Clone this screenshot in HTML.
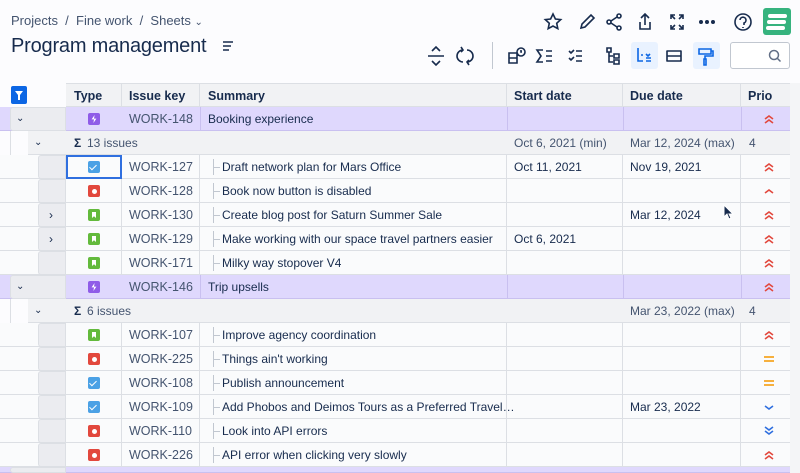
<!DOCTYPE html>
<html><head><meta charset="utf-8"><style>
*{margin:0;padding:0;box-sizing:border-box}
html,body{width:800px;height:473px;overflow:hidden}
body{background:#fcfcfe;font-family:"Liberation Sans",sans-serif;color:#172b4d;position:relative}
.a{position:absolute}
.bc{left:11px;top:13px;font-size:13px;color:#44546f}
.h1{left:11px;top:35px;font-size:20px;font-weight:500;color:#172b4d;letter-spacing:-0.2px}
.r{position:absolute;left:0;width:790px;height:24px;font-size:12px}
.c{position:absolute;top:0;height:24px;line-height:24px;white-space:nowrap;overflow:hidden}
.d{background:#fafbfc;border-bottom:1px solid #dcdfe4}
.d .c{border-right:1px solid #dcdfe4}
.g{background:#dfd8fd;border-bottom:1px solid #c9c0f0}
.s{background:#f1f2f4;border-bottom:1px solid #dcdfe4;color:#44546f}
.key{color:#44546f;font-size:12.5px}
.ty{position:absolute;left:88px;top:6px;width:12px;height:12px;border-radius:2px}
.tree{position:absolute;left:213px;top:4px;width:8px;height:16px;border-left:1px solid #c1c7d0}
.tree:after{content:"";position:absolute;left:0;top:8px;width:6px;border-top:1px solid #c1c7d0}
.gut{position:absolute;top:0;height:24px;background:#ebecf0;border:1px solid #dcdfe4;border-radius:3px 0 0 3px}
.pr{position:absolute;left:762px;top:5px}
.t{background:#4ba1e5}.t:after{content:"";position:absolute;left:3px;top:2px;width:3px;height:6px;border:solid #fff;border-width:0 1.5px 1.5px 0;transform:rotate(45deg)}
.b{background:#e2483d}.b:after{content:"";position:absolute;left:3.5px;top:3.5px;width:5px;height:5px;border-radius:50%;background:#fff}
.st{background:#63ba3c}.st:after{content:"";position:absolute;left:4px;top:3px;width:4px;height:6px;background:#fff;clip-path:polygon(0 0,100% 0,100% 100%,50% 70%,0 100%)}
.e{background:#8f5ce8}.e:after{content:"";position:absolute;left:3px;top:2px;width:6px;height:8px;background:#fff;clip-path:polygon(60% 0,10% 55%,50% 55%,40% 100%,90% 45%,50% 45%)}
</style></head><body>
<div class="a bc">Projects &nbsp;/ &nbsp;Fine work &nbsp;/ &nbsp;Sheets <span style="font-size:10px">⌄</span></div>
<div class="a h1">Program management</div>
<svg class="a" style="left:222px;top:40px" width="12" height="12"><path d="M1 2h10M1 6h8M1 10h6" stroke="#172b4d" stroke-width="1.6"/></svg>
<svg class="a" style="left:543px;top:12px" width="220" height="20" fill="none" stroke="#172b4d" stroke-width="1.6">
<path d="M10 2l2.4 5 5.3.6-4 3.7 1.1 5.3L10 14l-4.8 2.6 1.1-5.3-4-3.7 5.3-.6z"/>
<path d="M38 16l1-4 9-9 3 3-9 9z"/>
<circle cx="66" cy="10" r="2"/><circle cx="76" cy="4" r="2"/><circle cx="76" cy="16" r="2"/><path d="M68 9l6-4M68 11l6 4"/>
<path d="M102 2v11M98 6l4-4 4 4M97 10v7h10v-7"/>
<path d="M128 7V3h4M136 3h4v4M140 13v4h-4M132 17h-4v-4M128 3l4 4M140 3l-4 4M140 17l-4-4M128 17l4-4"/>
<circle cx="158" cy="10" r="1.2" fill="#172b4d"/><circle cx="164" cy="10" r="1.2" fill="#172b4d"/><circle cx="170" cy="10" r="1.2" fill="#172b4d"/>
<circle cx="200" cy="10" r="8"/><path d="M197 8a3 3 0 1 1 4 3v2M200 15v1"/>
</svg>
<div class="a" style="left:763px;top:8px;width:28px;height:27px;background:#36b37e;border-radius:3px"></div>
<svg class="a" style="left:763px;top:8px" width="28" height="27"><path d="M7 8h15M6 14h15M5 20h15" stroke="#fff" stroke-width="4" stroke-linecap="round"/></svg>
<div class="a" style="left:631px;top:42px;width:27px;height:27px;background:#e9f2ff;border-radius:3px"></div>
<div class="a" style="left:693px;top:42px;width:27px;height:27px;background:#e9f2ff;border-radius:3px"></div>
<div class="a" style="left:492px;top:42px;width:1px;height:27px;background:#c1c7d0"></div>
<svg class="a" style="left:425px;top:45px" width="300" height="22" fill="none" stroke="#172b4d" stroke-width="1.6">
<path d="M3 11h16M7 6l4-4 4 4M7 16l4 4 4-4"/>
<path d="M38 5a6 6 0 0 0 0 12M42 17a6 6 0 0 0 0-12M36 2l2 3-2 2M44 20l-2-3 2-2"/>
<path d="M86 8h6v10h-8V8zM84 13h8M96 3a4 4 0 1 1 0 8a4 4 0 0 1 0-8M96 5v2h1"/>
<path d="M118 5h-6l4 6-4 6h6M121 6h6M121 11h6M121 16h6"/>
<path d="M144 6l2 2 3-3M144 13l2 2 3-3M151 6h6M151 11h6M151 16h6"/>
<path d="M182 3h4v4h-4zM184 7v10h4M184 11h4M189 9h5v4h-5zM189 15h5v4h-5z"/>
<path d="M213 3v13h5M216 10h2M221 9l2 2 2-2M221 13h5M221 16h5" stroke="#0c66e4"/>
<path d="M242 6h14v5h-14zM242 11h14v5h-14z" stroke-linejoin="round"/>
<path d="M274 4h12v5h-12zM286 6h2v5h-8v3M279 14h2v6h-2z" stroke="#0c66e4"/>
</svg>
<div class="a" style="left:730px;top:42px;width:60px;height:27px;border:1px solid #c1c7d0;border-radius:3px;background:#fff"></div>
<svg class="a" style="left:768px;top:49px" width="14" height="14" fill="none" stroke="#626f86" stroke-width="1.5"><circle cx="6" cy="6" r="4.5"/><path d="M9.5 9.5l3 3"/></svg>
<div class="a" style="left:11px;top:86px;width:16px;height:18px;background:#0c66e4;border-radius:2px"></div>
<svg class="a" style="left:11px;top:86px" width="16" height="18"><path d="M4 5h8l-3 4v5h-2V9z" fill="#fff"/></svg>
<div class="r" style="top:83px;left:66px;width:724px;background:#f1f2f4;border-bottom:1px solid #dcdfe4;border-top:1px solid #dcdfe4;font-weight:bold;font-size:12.5px">
<div class="c" style="left:0;width:56px;padding-left:8px;border-right:1px solid #dcdfe4">Type</div>
<div class="c" style="left:56px;width:78px;padding-left:7px;border-right:1px solid #dcdfe4">Issue key</div>
<div class="c" style="left:134px;width:307px;padding-left:8px;border-right:1px solid #dcdfe4">Summary</div>
<div class="c" style="left:441px;width:116px;padding-left:7px;border-right:1px solid #dcdfe4">Start date</div>
<div class="c" style="left:557px;width:118px;padding-left:7px;border-right:1px solid #dcdfe4">Due date</div>
<div class="c" style="left:675px;width:49px;padding-left:7px">Prio</div>
</div>
<div class="a" style="left:790px;top:83px;width:10px;height:390px;background:#f4f5f7"></div>
<div class="a" style="left:10px;top:107px;width:1px;height:366px;background:#dcdfe4"></div>
<div class="a" style="left:28px;top:131px;width:1px;height:342px;background:#dcdfe4"></div>

<div class="r g" style="top:107px"><div class="gut" style="left:10px;width:56px"></div><div class="c" style="left:16px;font-size:10px">⌄</div>
<div class="ty e"></div><div class="c key" style="left:129px">WORK-148</div><div class="c" style="left:208px">Booking experience</div>
<div class="c" style="left:200px;width:1px;background:#c9c0f0"></div><div class="c" style="left:507px;width:1px;background:#c9c0f0"></div><div class="c" style="left:623px;width:1px;background:#c9c0f0"></div><div class="c" style="left:741px;width:1px;background:#c9c0f0"></div>
<svg class="pr" width="14" height="14" fill="none" stroke="#e2483d" stroke-width="1.6"><path d="M3 7l4-3 4 3M3 11l4-3 4 3"/></svg></div>
<div class="r s" style="top:131px;left:28px;width:762px"><div class="c" style="left:6px;font-size:10px;color:#172b4d">⌄</div>
<div class="c" style="left:46px;color:#172b4d;font-weight:bold">Σ</div><div class="c" style="left:59px">13 issues</div>
<div class="c" style="left:486px">Oct 6, 2021 (min)</div><div class="c" style="left:602px">Mar 12, 2024 (max)</div><div class="c" style="left:721px">4</div></div>

<div class="r d" style="top:155px"><div class="gut" style="left:38px;width:28px"></div><div class="c" style="left:66px;width:56px;border:2px solid #2f6fdf;height:24px"></div><div class="ty t"></div><div class="c" style="left:122px;width:78px;padding-left:7px"><span class="key">WORK-127</span></div><div class="c" style="left:200px;width:307px"></div><div class="tree"></div><div class="c" style="left:222px;border:0">Draft network plan for Mars Office</div><div class="c" style="left:507px;width:116px;padding-left:7px">Oct 11, 2021</div><div class="c" style="left:623px;width:118px;padding-left:7px">Nov 19, 2021</div><svg class="pr" width="14" height="14" fill="none" stroke="#e2483d" stroke-width="1.6"><path d="M3 7l4-3 4 3M3 11l4-3 4 3"/></svg></div>

<div class="r d" style="top:179px"><div class="gut" style="left:38px;width:28px"></div><div class="c" style="left:66px;width:56px"></div><div class="ty b"></div><div class="c" style="left:122px;width:78px;padding-left:7px"><span class="key">WORK-128</span></div><div class="c" style="left:200px;width:307px"></div><div class="tree"></div><div class="c" style="left:222px;border:0">Book now button is disabled</div><div class="c" style="left:507px;width:116px"></div><div class="c" style="left:623px;width:118px"></div><svg class="pr" width="14" height="14" fill="none" stroke="#e2483d" stroke-width="1.6"><path d="M3 9l4-3 4 3"/></svg></div>

<div class="r d" style="top:203px"><div class="gut" style="left:38px;width:28px"></div><div class="c" style="left:49px;border:0">›</div><div class="c" style="left:66px;width:56px"></div><div class="ty st"></div><div class="c" style="left:122px;width:78px;padding-left:7px"><span class="key">WORK-130</span></div><div class="c" style="left:200px;width:307px"></div><div class="tree"></div><div class="c" style="left:222px;border:0">Create blog post for Saturn Summer Sale</div><div class="c" style="left:507px;width:116px"></div><div class="c" style="left:623px;width:118px;padding-left:7px">Mar 12, 2024</div><svg class="pr" width="14" height="14" fill="none" stroke="#e2483d" stroke-width="1.6"><path d="M3 7l4-3 4 3M3 11l4-3 4 3"/></svg></div>

<div class="r d" style="top:227px"><div class="gut" style="left:38px;width:28px"></div><div class="c" style="left:49px;border:0">›</div><div class="c" style="left:66px;width:56px"></div><div class="ty st"></div><div class="c" style="left:122px;width:78px;padding-left:7px"><span class="key">WORK-129</span></div><div class="c" style="left:200px;width:307px"></div><div class="tree"></div><div class="c" style="left:222px;border:0">Make working with our space travel partners easier</div><div class="c" style="left:507px;width:116px;padding-left:7px">Oct 6, 2021</div><div class="c" style="left:623px;width:118px"></div><svg class="pr" width="14" height="14" fill="none" stroke="#e2483d" stroke-width="1.6"><path d="M3 7l4-3 4 3M3 11l4-3 4 3"/></svg></div>

<div class="r d" style="top:251px"><div class="gut" style="left:38px;width:28px"></div><div class="c" style="left:66px;width:56px"></div><div class="ty st"></div><div class="c" style="left:122px;width:78px;padding-left:7px"><span class="key">WORK-171</span></div><div class="c" style="left:200px;width:307px"></div><div class="tree"></div><div class="c" style="left:222px;border:0">Milky way stopover V4</div><div class="c" style="left:507px;width:116px"></div><div class="c" style="left:623px;width:118px"></div><svg class="pr" width="14" height="14" fill="none" stroke="#e2483d" stroke-width="1.6"><path d="M3 7l4-3 4 3M3 11l4-3 4 3"/></svg></div>

<div class="r g" style="top:275px"><div class="gut" style="left:10px;width:56px"></div><div class="c" style="left:16px;font-size:10px">⌄</div>
<div class="ty e"></div><div class="c key" style="left:129px">WORK-146</div><div class="c" style="left:208px">Trip upsells</div>
<div class="c" style="left:200px;width:1px;background:#c9c0f0"></div><div class="c" style="left:507px;width:1px;background:#c9c0f0"></div><div class="c" style="left:623px;width:1px;background:#c9c0f0"></div><div class="c" style="left:741px;width:1px;background:#c9c0f0"></div>
<svg class="pr" width="14" height="14" fill="none" stroke="#e2483d" stroke-width="1.6"><path d="M3 7l4-3 4 3M3 11l4-3 4 3"/></svg></div>
<div class="r s" style="top:299px;left:28px;width:762px"><div class="c" style="left:6px;font-size:10px;color:#172b4d">⌄</div>
<div class="c" style="left:46px;color:#172b4d;font-weight:bold">Σ</div><div class="c" style="left:59px">6 issues</div>
<div class="c" style="left:602px">Mar 23, 2022 (max)</div><div class="c" style="left:721px">4</div></div>

<div class="r d" style="top:323px"><div class="gut" style="left:38px;width:28px"></div><div class="c" style="left:66px;width:56px"></div><div class="ty st"></div><div class="c" style="left:122px;width:78px;padding-left:7px"><span class="key">WORK-107</span></div><div class="c" style="left:200px;width:307px"></div><div class="tree"></div><div class="c" style="left:222px;border:0">Improve agency coordination</div><div class="c" style="left:507px;width:116px"></div><div class="c" style="left:623px;width:118px"></div><svg class="pr" width="14" height="14" fill="none" stroke="#e2483d" stroke-width="1.6"><path d="M3 7l4-3 4 3M3 11l4-3 4 3"/></svg></div>

<div class="r d" style="top:347px"><div class="gut" style="left:38px;width:28px"></div><div class="c" style="left:66px;width:56px"></div><div class="ty b"></div><div class="c" style="left:122px;width:78px;padding-left:7px"><span class="key">WORK-225</span></div><div class="c" style="left:200px;width:307px"></div><div class="tree"></div><div class="c" style="left:222px;border:0">Things ain't working</div><div class="c" style="left:507px;width:116px"></div><div class="c" style="left:623px;width:118px"></div><svg class="pr" width="14" height="14" fill="none" stroke="#f5a623" stroke-width="1.8"><path d="M2 5h10M2 9h10"/></svg></div>

<div class="r d" style="top:371px"><div class="gut" style="left:38px;width:28px"></div><div class="c" style="left:66px;width:56px"></div><div class="ty t"></div><div class="c" style="left:122px;width:78px;padding-left:7px"><span class="key">WORK-108</span></div><div class="c" style="left:200px;width:307px"></div><div class="tree"></div><div class="c" style="left:222px;border:0">Publish announcement</div><div class="c" style="left:507px;width:116px"></div><div class="c" style="left:623px;width:118px"></div><svg class="pr" width="14" height="14" fill="none" stroke="#f5a623" stroke-width="1.8"><path d="M2 5h10M2 9h10"/></svg></div>

<div class="r d" style="top:395px"><div class="gut" style="left:38px;width:28px"></div><div class="c" style="left:66px;width:56px"></div><div class="ty t"></div><div class="c" style="left:122px;width:78px;padding-left:7px"><span class="key">WORK-109</span></div><div class="c" style="left:200px;width:307px"></div><div class="tree"></div><div class="c" style="left:222px;border:0">Add Phobos and Deimos Tours as a Preferred Travel…</div><div class="c" style="left:507px;width:116px"></div><div class="c" style="left:623px;width:118px;padding-left:7px">Mar 23, 2022</div><svg class="pr" width="14" height="14" fill="none" stroke="#2f6fdf" stroke-width="1.6"><path d="M3 6l4 3 4-3"/></svg></div>

<div class="r d" style="top:419px"><div class="gut" style="left:38px;width:28px"></div><div class="c" style="left:66px;width:56px"></div><div class="ty b"></div><div class="c" style="left:122px;width:78px;padding-left:7px"><span class="key">WORK-110</span></div><div class="c" style="left:200px;width:307px"></div><div class="tree"></div><div class="c" style="left:222px;border:0">Look into API errors</div><div class="c" style="left:507px;width:116px"></div><div class="c" style="left:623px;width:118px"></div><svg class="pr" width="14" height="14" fill="none" stroke="#2f6fdf" stroke-width="1.6"><path d="M3 3l4 3 4-3M3 7l4 3 4-3"/></svg></div>

<div class="r d" style="top:443px"><div class="gut" style="left:38px;width:28px"></div><div class="c" style="left:66px;width:56px"></div><div class="ty b"></div><div class="c" style="left:122px;width:78px;padding-left:7px"><span class="key">WORK-226</span></div><div class="c" style="left:200px;width:307px"></div><div class="tree"></div><div class="c" style="left:222px;border:0">API error when clicking very slowly</div><div class="c" style="left:507px;width:116px"></div><div class="c" style="left:623px;width:118px"></div><svg class="pr" width="14" height="14" fill="none" stroke="#e2483d" stroke-width="1.6"><path d="M3 7l4-3 4 3M3 11l4-3 4 3"/></svg></div>

<div class="r g" style="top:467px;height:6px"><div class="gut" style="left:10px;width:56px;height:6px"></div></div>

<svg class="a" style="left:723px;top:204px" width="12" height="16"><path d="M1 1v12l3-3 2 5 2-1-2-4h4z" fill="#172b4d" stroke="#fff" stroke-width="1"/></svg>
</body></html>
